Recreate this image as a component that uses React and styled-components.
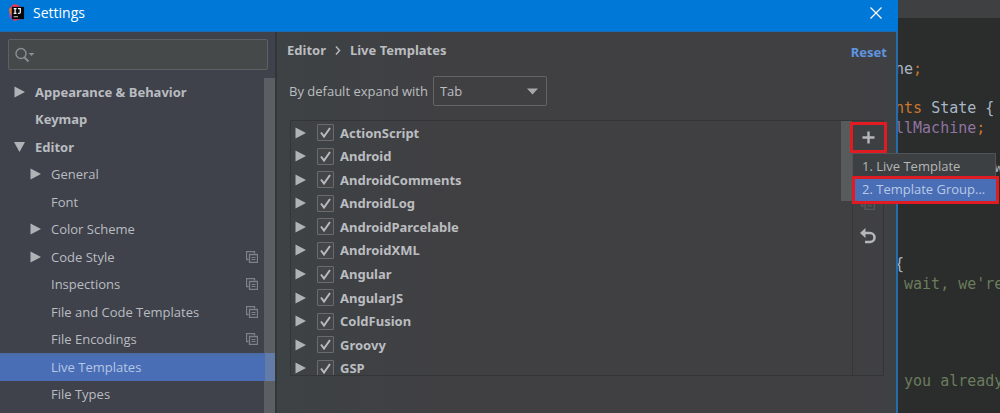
import React from "react";
import styled, { createGlobalStyle, css } from "styled-components";

const GlobalStyle = createGlobalStyle`
  * { box-sizing: border-box; }
  body {
    margin: 0;
    background: #2b2b2b;
    font-family: "Open Sans", "Noto Sans", sans-serif;
    font-size: 13px;
    color: #bbbdc0;
  }
  button, input, select { font: inherit; color: inherit; }
`;

const Screen = styled.div`
  display: grid;
  grid-template-columns: minmax(0, 1fr) 102px;
  height: 100vh;
  overflow: hidden;
`;

const Dialog = styled.section`
  position: relative;
  z-index: 1;
  display: flex;
  flex-direction: column;
  min-height: 0;
  border-right: 2px solid #246cab;
  background: #3f4143;
`;

const TitleBar = styled.header`
  display: flex;
  align-items: center;
  flex: none;
  gap: 8px;
  height: 32px;
  margin-right: -2px;
  padding: 0 16px 6px 9px;
  border-bottom: 1px solid #1b6cb3;
  background: #0078d7;
  color: #fff;
`;

const Title = styled.h1`
  flex: 1;
  margin: 0;
  font-size: 14px;
  font-weight: 400;
  line-height: 20px;
`;

const IconButton = styled.button`
  display: flex;
  align-items: center;
  justify-content: center;
  padding: 0;
  border: 0;
  background: none;
  color: inherit;
`;

const Body = styled.div`
  display: flex;
  flex: 1;
  min-height: 0;
`;

const Sidebar = styled.aside`
  display: flex;
  flex-direction: column;
  flex: none;
  width: 277px;
  border-right: 2px solid #34373a;
  background: #3f424b;
`;

const SearchBox = styled.label`
  display: flex;
  align-items: center;
  flex: none;
  height: 31px;
  margin: 7px 7px 8px 8px;
  padding-left: 6px;
  border: 1px solid #5e6163;
  border-radius: 2px;
  background: #454949;
  color: #8c8f92;
`;

const SearchInput = styled.input`
  flex: 1;
  min-width: 0;
  border: 0;
  outline: 0;
  background: none;
`;

const TreeScroller = styled.div`
  display: flex;
  flex: 1;
  min-height: 0;
  overflow: hidden;
`;

const Tree = styled.nav`
  display: grid;
  grid-auto-rows: 1fr;
  flex: 1;
  height: 330px;
`;

const TreeRow = styled.div`
  display: flex;
  align-items: center;
  gap: 8px;
  padding-left: ${(p) => (p.$depth ? 28 : 12)}px;
  padding-right: 6px;
  color: #b9bcc0;
  ${(p) =>
    p.$selected &&
    css`
      margin-right: -12px;
      padding-right: 18px;
      background: linear-gradient(90deg, transparent calc(100% - 11px), #627ba9 0),
        linear-gradient(#4a6ca4, #4a6eb6 5px);
      color: #b4c6e4;
      z-index: 1;
    `}
  & > svg { color: #7d8188; }
`;

const TreeLink = styled.a`
  flex: 1;
  color: inherit;
  ${(p) =>
    p.$bold &&
    css`
      font-family: "Noto Sans", sans-serif;
      font-weight: 700;
    `}
  line-height: 20px;
  text-decoration: none;
  white-space: nowrap;
`;

const ArrowSlot = styled.span`
  display: flex;
  flex: none;
  width: 15px;
  justify-content: center;
`;

const SideScrollbar = styled.div`
  flex: none;
  width: 11px;
  background: #5b5e63;
`;

const Main = styled.main`
  display: flex;
  flex: 1;
  flex-direction: column;
  min-width: 0;
  padding: 8px 12px 0 10px;
  background: linear-gradient(90deg, #3d4244, #404043 25%, #404043 96%, #3d4143);
`;

const TopLine = styled.div`
  display: flex;
  justify-content: space-between;
  height: 22px;
  margin-right: -3px;
`;

const Crumbs = styled.div`
  display: flex;
  align-items: center;
  gap: 9px;
  height: 20px;
  font-family: "Noto Sans", sans-serif;
  font-weight: 700;
  line-height: 20px;
`;

const ResetLink = styled.a`
  padding-top: 2px;
  color: #5e95e0;
  font-family: "Noto Sans", sans-serif;
  font-weight: 700;
  line-height: 20px;
  text-decoration: none;
`;

const ExpandLine = styled.div`
  display: flex;
  align-items: center;
  gap: 5px;
  margin: 14px 0 14px 2px;
`;

const SelectWrap = styled.div`
  position: relative;
  width: 114px;
  height: 30px;
  svg {
    position: absolute;
    top: 12px;
    right: 9px;
    pointer-events: none;
  }
`;

const Select = styled.select`
  width: 100%;
  height: 100%;
  padding: 0 6px;
  appearance: none;
  border: 1px solid #626466;
  border-radius: 2px;
  outline: 0;
  background: transparent;
`;

const TemplatePanel = styled.div`
  display: flex;
  height: 256px;
  margin-left: 3px;
  border: 1px solid #333537;
`;

const TemplateViewport = styled.div`
  display: flex;
  flex: 1;
  overflow: hidden;
`;

const TemplateList = styled.ul`
  display: grid;
  grid-auto-rows: 1fr;
  flex: 1;
  height: 259px;
  margin: 0;
  padding: 0 0 0 4px;
  list-style: none;
`;

const TemplateRow = styled.li`
  display: flex;
  align-items: center;
  gap: 11px;
`;

const TemplateLabel = styled.label`
  display: flex;
  align-items: center;
  gap: 6px;
  font-family: "Noto Sans", sans-serif;
  font-weight: 700;
  line-height: 20px;
`;

const CheckWrap = styled.span`
  position: relative;
  display: flex;
  svg {
    position: absolute;
    inset: 0;
    pointer-events: none;
  }
`;

const Checkbox = styled.input`
  width: 17px;
  height: 17px;
  margin: 0;
  appearance: none;
  border: 1px solid #696b6d;
  border-radius: 1px;
  background: #434547;
  & + svg { visibility: hidden; }
  &:checked + svg { visibility: visible; }
`;

const ListScrollbar = styled.div`
  width: 11px;
  height: 80px;
  background: #595a5c;
`;

const ToolColumn = styled.div`
  position: relative;
  display: flex;
  flex-direction: column;
  align-items: center;
  width: 31px;
  border-left: 1px solid #343638;
  color: #b4b6b8;
`;

const AddButton = styled(IconButton)`
  flex: none;
  width: 37px;
  height: 31px;
  margin-top: 1px;
  border: 3px solid #e01b22;
  background: #3d4042;
`;

const CopyButton = styled(IconButton)`
  margin-top: 43px;
  color: #55585a;
`;

const UndoButton = styled(IconButton)`
  margin-top: 18px;
`;

const Menu = styled.div`
  position: absolute;
  top: 32px;
  left: -1px;
  display: flex;
  flex-direction: column;
  width: 144px;
  border: 1px solid #515456;
  background: #3c4042;
`;

const MenuItem = styled.button`
  height: 22px;
  padding: 1px 0 0 9px;
  border: 0;
  background: none;
  line-height: 18px;
  text-align: left;
  white-space: nowrap;
  ${(p) =>
    p.$selected &&
    css`
      width: 147px;
      height: 28px;
      margin: 0 0 -3px -1px;
      padding: 0 0 2px 7px;
      border: 3px solid #e01b22;
      background: #4a6eb6;
      color: #b8c9e6;
    `}
`;

const Editor = styled.aside`
  min-width: 0;
  overflow: hidden;
  background: #2b2c2c;
`;

const EditorTabs = styled.div`
  height: 18px;
  background: #3f4042;
`;

const Code = styled.div`
  display: grid;
  grid-auto-rows: 1fr;
  height: 332px;
  margin-top: 42px;
  margin-left: -3px;
  font: 15px/19px "DejaVu Sans Mono", monospace;
  color: #a9b7c6;
  white-space: pre;
`;

const CodeLine = styled.div`
  text-align: ${(p) => (p.$end ? "right" : "left")};
`;

const Token = styled.span`
  color: ${(p) => ({ keyword: "#c9772f", field: "#8f74a0", string: "#6a7d5c" })[p.$kind]};
`;

const Triangle = ({ down }) => (
  <svg width="11" height="12" viewBox="0 0 11 12" fill="#b0b3b6" aria-hidden="true">
    <path d={down ? "M0 1h11L5.500 11z" : "M0.500 0.500L11 6L0.500 11.500z"} />
  </svg>
);

const CopyIcon = ({ size = 12 }) => (
  <svg width={size} height={size} viewBox="0 0 12 12" fill="none" stroke="currentColor" aria-hidden="true">
    <path d="M2.500 8.500h-2v-8h8v2" strokeWidth="1.300" />
    <path d="M3.500 3.500h8v8h-8z" strokeWidth="1.300" />
    <path d="M5.500 6.500h4M5.500 8.500h4" />
  </svg>
);

const IdeaLogo = () => (
  <svg width="16" height="17" viewBox="0 0 17 18" aria-hidden="true">
    <path d="M1 4L5 0l5 1 3 3v12l-7 2-4-3z" fill="#e8375e" />
    <path d="M0 5l4-2v9l-3 1z" fill="#f06a35" />
    <path d="M0 10l3 2v5l-3-3z" fill="#7a55c8" />
    <path d="M3 3h13v13H3z" fill="#0a0708" />
    <path d="M5 5h3M6.500 5v5M5 10h3M9.500 5H12v4q0 1-2.500 1" fill="none" stroke="#fff" strokeWidth="1.300" />
    <path d="M5 13.500h4.500" stroke="#ddd" />
  </svg>
);

const treeItems = [
  { name: "Appearance & Behavior", arrow: "right", bold: true },
  { name: "Keymap", bold: true },
  { name: "Editor", arrow: "down", bold: true },
  { name: "General", depth: 1, arrow: "right" },
  { name: "Font", depth: 1 },
  { name: "Color Scheme", depth: 1, arrow: "right" },
  { name: "Code Style", depth: 1, arrow: "right", copy: true },
  { name: "Inspections", depth: 1, copy: true },
  { name: "File and Code Templates", depth: 1, copy: true },
  { name: "File Encodings", depth: 1, copy: true },
  { name: "Live Templates", depth: 1, selected: true },
  { name: "File Types", depth: 1 },
];

const templates = [
  "ActionScript",
  "Android",
  "AndroidComments",
  "AndroidLog",
  "AndroidParcelable",
  "AndroidXML",
  "Angular",
  "AngularJS",
  "ColdFusion",
  "Groovy",
  "GSP",
];

const codeLines = [
  { tokens: [["", "ne"], ["keyword", ";"]] },
  {},
  { tokens: [["keyword", "nts "], ["", "State {"]] },
  { tokens: [["field", "llMachine"], ["keyword", ";"]] },
  {},
  { end: true, tokens: [["", "w"]] },
  {},
  {},
  {},
  {},
  { tokens: [["", "{"]] },
  { tokens: [["string", " wait, we're"]] },
  {},
  {},
  {},
  {},
  { tokens: [["string", " you already"]] },
];

export default function App() {
  return (
    <>
      <GlobalStyle />
      <Screen>
        <Dialog>
          <TitleBar>
            <IdeaLogo />
            <Title>Settings</Title>
            <IconButton aria-label="Close">
              <svg width="12" height="12" viewBox="0 0 12 12" stroke="#fff" strokeWidth="1.200">
                <path d="M0.500 0.500l11 11M11.500 0.500l-11 11" />
              </svg>
            </IconButton>
          </TitleBar>
          <Body>
            <Sidebar>
              <SearchBox>
                <svg width="20" height="16" viewBox="0 0 20 16" fill="none" stroke="currentColor" strokeWidth="1.400" aria-hidden="true">
                  <circle cx="6" cy="6.500" r="5" />
                  <path d="M9.500 10.500l4 4" strokeWidth="2" />
                  <path d="M13.500 6h6l-3 3z" fill="currentColor" stroke="none" />
                </svg>
                <SearchInput type="text" aria-label="Search settings" />
              </SearchBox>
              <TreeScroller>
                <Tree>
                  {treeItems.map((item) => (
                    <TreeRow key={item.name} $depth={item.depth} $selected={item.selected}>
                      <ArrowSlot>{item.arrow && <Triangle down={item.arrow === "down"} />}</ArrowSlot>
                      <TreeLink href="#" $bold={item.bold}>
                        {item.name}
                      </TreeLink>
                      {item.copy && <CopyIcon />}
                    </TreeRow>
                  ))}
                </Tree>
                <SideScrollbar />
              </TreeScroller>
            </Sidebar>
            <Main>
              <TopLine>
                <Crumbs>
                  <span>Editor</span>
                  <svg width="6" height="9" viewBox="0 0 6 9" fill="none" stroke="#b4b6b8" strokeWidth="1.500" aria-hidden="true">
                    <path d="M1 0.500L4.500 4.500L1 8.500" />
                  </svg>
                  <span>Live Templates</span>
                </Crumbs>
                <ResetLink href="#">Reset</ResetLink>
              </TopLine>
              <ExpandLine>
                <label htmlFor="expand">By default expand with</label>
                <SelectWrap>
                  <Select id="expand" defaultValue="Tab">
                    <option>Tab</option>
                  </Select>
                  <svg width="11" height="7" viewBox="0 0 11 7" fill="#a6a8aa" aria-hidden="true">
                    <path d="M0 0.500h11L5.500 6.500z" />
                  </svg>
                </SelectWrap>
              </ExpandLine>
              <TemplatePanel>
                <TemplateViewport>
                  <TemplateList>
                    {templates.map((name) => (
                      <TemplateRow key={name}>
                        <IconButton aria-label={"Expand " + name}>
                          <Triangle />
                        </IconButton>
                        <TemplateLabel>
                          <CheckWrap>
                            <Checkbox type="checkbox" defaultChecked />
                            <svg width="17" height="17" viewBox="0 0 17 17" fill="none" stroke="#b8babc" strokeWidth="2" aria-hidden="true">
                              <path d="M4 8.500l3 4L13 4" />
                            </svg>
                          </CheckWrap>
                          {name}
                        </TemplateLabel>
                      </TemplateRow>
                    ))}
                  </TemplateList>
                  <ListScrollbar />
                </TemplateViewport>
                <ToolColumn>
                  <AddButton aria-label="Add">
                    <svg width="13" height="13" viewBox="0 0 13 13" stroke="currentColor" strokeWidth="2.400">
                      <path d="M6.500 0.500v12M0.500 6.500h12" />
                    </svg>
                  </AddButton>
                  <CopyButton aria-label="Duplicate">
                    <CopyIcon size={14} />
                  </CopyButton>
                  <UndoButton aria-label="Restore defaults">
                    <svg width="16" height="16" viewBox="0 0 16 16" fill="none" stroke="currentColor" strokeWidth="2.600">
                      <path d="M3 5h7a4.500 4.500 0 0 1 0 9H5" />
                      <path d="M0 5L5.500 0v10z" fill="currentColor" stroke="none" />
                    </svg>
                  </UndoButton>
                  <Menu>
                    <MenuItem>1. Live Template</MenuItem>
                    <MenuItem $selected>2. Template Group...</MenuItem>
                  </Menu>
                </ToolColumn>
              </TemplatePanel>
            </Main>
          </Body>
        </Dialog>
        <Editor>
          <EditorTabs />
          <Code>
            {codeLines.map(({ end, tokens = [] }, i) => (
              <CodeLine key={i} $end={end}>
                {tokens.map(([kind, text]) => (
                  <Token key={text} $kind={kind}>
                    {text}
                  </Token>
                ))}
              </CodeLine>
            ))}
          </Code>
        </Editor>
      </Screen>
    </>
  );
}
